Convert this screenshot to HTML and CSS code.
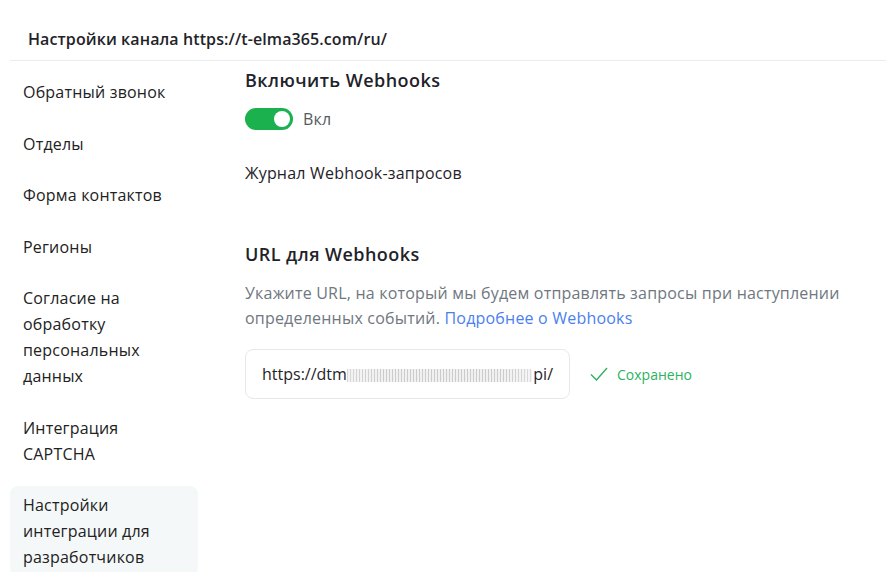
FILE: index.html
```
<!DOCTYPE html>
<html lang="ru">
<head>
<meta charset="utf-8">
<link rel="stylesheet" href="styles.css">
</head>
<body>
<div class="page">
  <header class="header">Настройки канала https://t-elma365.com/ru/</header>
  <div class="body">
    <nav class="sidebar">
      <div class="item">Обратный звонок</div>
      <div class="item">Отделы</div>
      <div class="item">Форма контактов</div>
      <div class="item">Регионы</div>
      <div class="item">Согласие на обработку персональных данных</div>
      <div class="item">Интеграция CAPTCHA</div>
      <div class="item active">Настройки интеграции для разработчиков</div>
    </nav>
    <main class="content">
      <h2 class="title">Включить Webhooks</h2>
      <div class="toggle-row">
        <span class="toggle"><span class="knob"></span></span>
        <span class="toggle-label">Вкл</span>
      </div>
      <div class="journal">Журнал Webhook-запросов</div>
      <h2 class="title title2">URL для Webhooks</h2>
      <p class="desc">Укажите URL, на который мы будем отправлять запросы при наступлении определенных событий. <a class="link" href="#">Подробнее о Webhooks</a></p>
      <div class="url-row">
        <div class="input"><span>https://dtm</span><span class="blur"></span><span>pi/</span></div>
        <div class="saved">
          <svg class="check" width="18" height="14" viewBox="0 0 18 14"><path d="M1 7.5 L6.5 13 L17 1" fill="none" stroke="#2bb35f" stroke-width="1.4"/></svg>
          <span>Сохранено</span>
        </div>
      </div>
    </main>
  </div>
</div>
</body>
</html>
```
FILE: styles.css
```
* { box-sizing: border-box; }
html, body { margin: 0; padding: 0; background: #fff; }
body {
  font-family: "Open Sans", "Noto Sans", "Liberation Sans", sans-serif;
  color: #1f2329;
  font-size: 16px;
  letter-spacing: 0.2px;
}
.page { width: 886px; height: 572px; overflow: hidden; }
.header {
  margin-left: 10px;
  padding: 28px 0 0 18px;
  height: 61px;
  font-size: 16px;
  font-weight: 600;
  letter-spacing: 0.1px;
  border-bottom: 1px solid #eaecee;
}
.body { display: flex; }
.sidebar {
  width: 188px;
  margin-left: 10px;
  padding-top: 12px;
  display: flex;
  flex-direction: column;
  gap: 13.5px;
}
.item {
  padding: 6px 13px;
  line-height: 26px;
  font-size: 16px;
  color: #222;
  border-radius: 8px;
}
.item.active { background: #f5f8f9; }
.content { padding-left: 47px; padding-top: 6px; }
.title {
  margin: 0;
  font-size: 18px;
  font-weight: 600;
  line-height: 26px;
  letter-spacing: 0.45px;
  color: #1f2329;
}
.toggle-row { display: flex; align-items: center; gap: 10px; margin-top: 15px; }
.toggle {
  width: 48px; height: 22px; border-radius: 11px; background: #1bb14f;
  display: flex; align-items: center; justify-content: flex-end; padding-right: 3px;
}
.knob { width: 16px; height: 16px; border-radius: 50%; background: #fff; }
.toggle-label { color: #555b61; line-height: 22px; }
.journal { margin-top: 30px; line-height: 26px; }
.title2 { margin-top: 55px; }
.desc {
  margin: 14px 0 0;
  color: #6f7780;
  line-height: 25px;
  width: 620px;
}
.link { color: #4a7ff0; text-decoration: none; }
.url-row { display: flex; align-items: center; margin-top: 18px; gap: 20px; }
.input {
  width: 325px; height: 50px; border: 1px solid #e6e8eb; border-radius: 8px;
  padding: 0 16px; display: flex; align-items: center; white-space: nowrap; overflow: hidden;
  color: #1f2329; letter-spacing: 0;
}
.blur {
  display: inline-block;
  width: 210px;
  height: 13px;
  margin: 3px 1px 0 0;
  background:
    linear-gradient(90deg, rgba(255,255,255,0.2), rgba(255,255,255,0) 20%, rgba(255,255,255,0) 85%, rgba(255,255,255,0.3)),
    repeating-linear-gradient(90deg, #c4c4c4 0 1.5px, #efefef 1.5px 3px);
  filter: blur(0.6px);
  opacity: 0.85;
}
.saved { display: flex; align-items: center; gap: 9px; color: #2bb35f; font-size: 14px; letter-spacing: 0; }
```
